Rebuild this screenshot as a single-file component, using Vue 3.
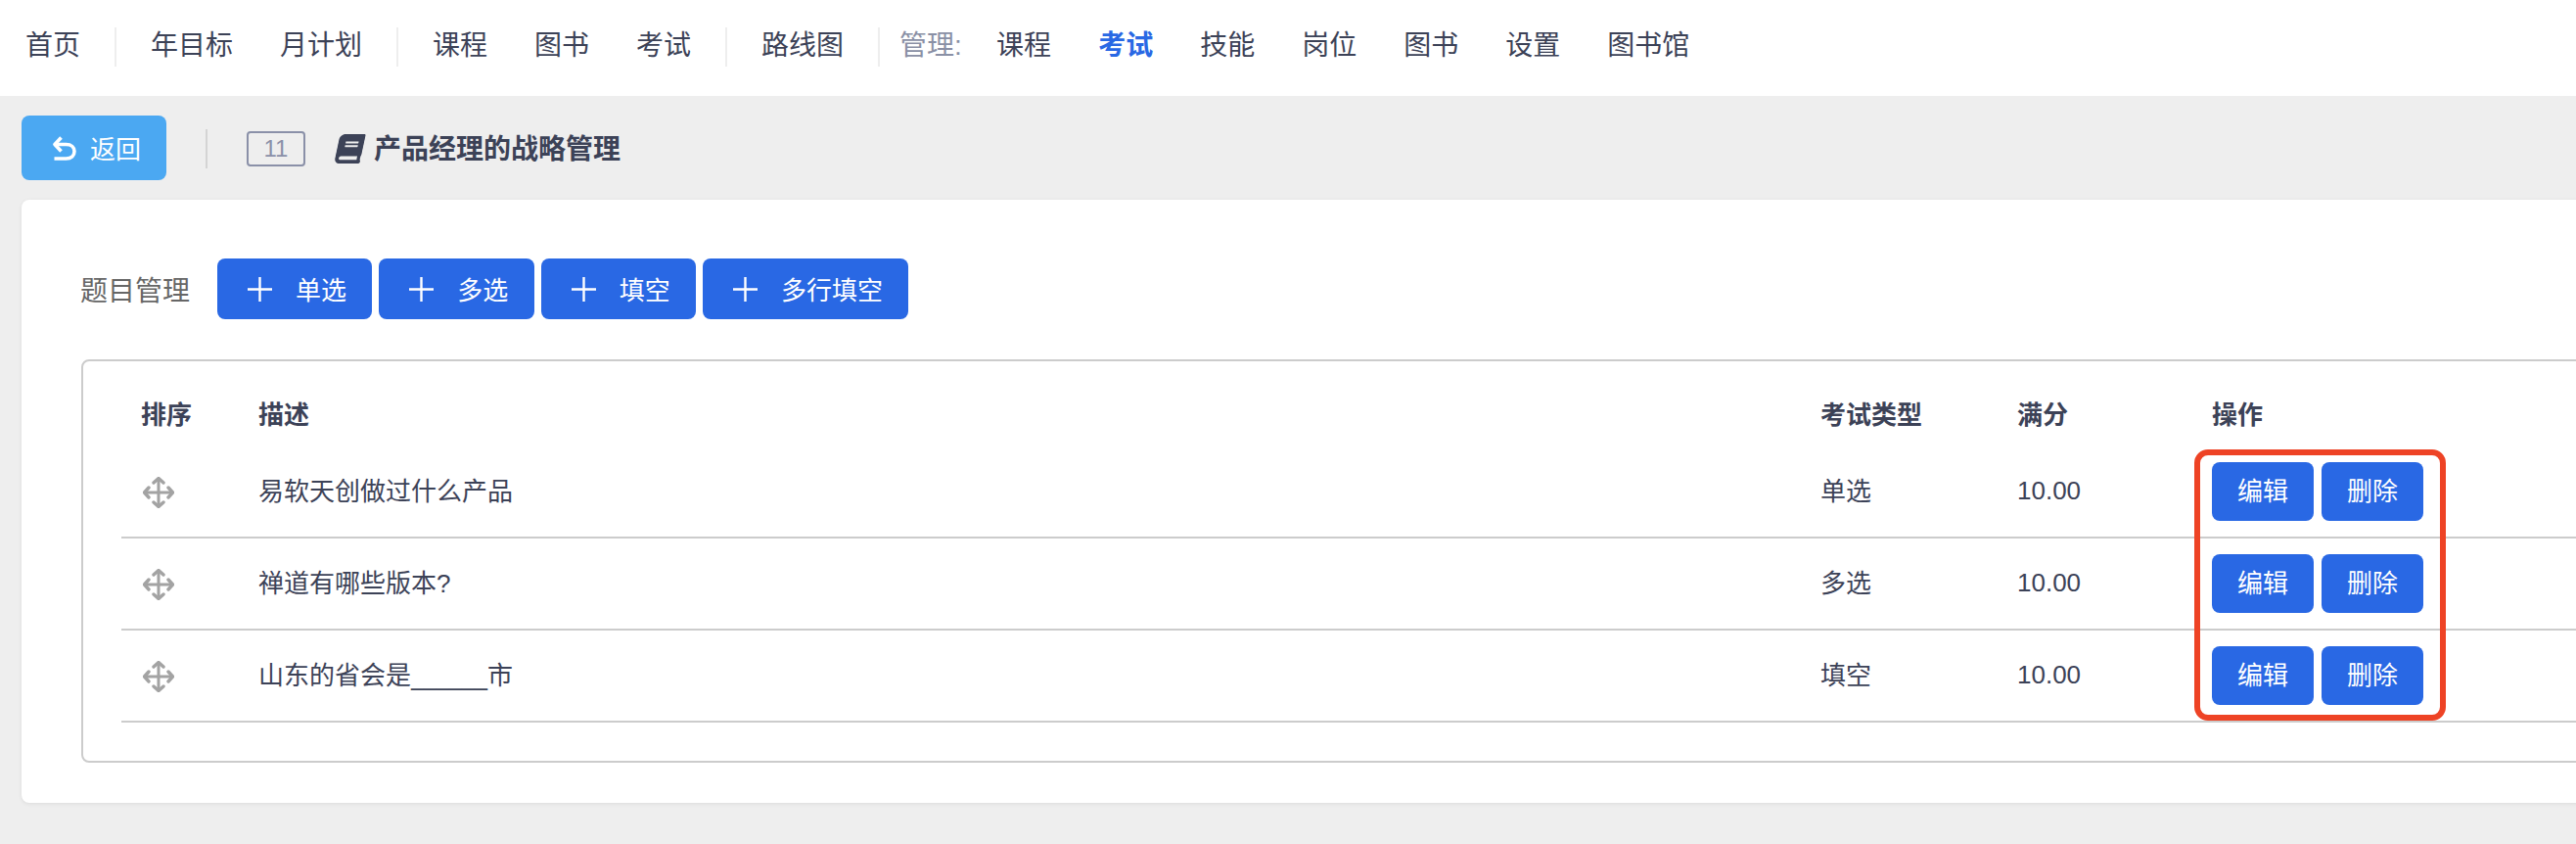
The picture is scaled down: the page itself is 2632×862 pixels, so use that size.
<script setup>
const navGroups = [
  ['首页'],
  ['年目标', '月计划'],
  ['课程', '图书', '考试'],
  ['路线图']
]
const adminItems = ['课程', '考试', '技能', '岗位', '图书', '设置', '图书馆']
const addButtons = ['单选', '多选', '填空', '多行填空']
const rows = [
  { id: 1, desc: '易软天创做过什么产品', type: '单选', score: '10.00' },
  { id: 2, desc: '禅道有哪些版本?', type: '多选', score: '10.00' },
  { id: 3, desc: '山东的省会是', blank: '______', tail: '市', type: '填空', score: '10.00' }
]
</script>

<template>
  <div class="page">
    <nav class="nav">
      <template v-for="(group, i) in navGroups" :key="i">
        <a v-for="item in group" :key="item" class="nav-item">{{ item }}</a>
        <span class="nav-sep"></span>
      </template>
      <span class="nav-label">管理:</span>
      <a
        v-for="item in adminItems"
        :key="item"
        class="nav-item"
        :class="{ active: item === '考试' }"
      >{{ item }}</a>
    </nav>

    <header class="subbar">
      <button class="back-btn">
        <svg class="back-icon" viewBox="1 0 23 25" fill="none" stroke="#fff" stroke-width="3.6">
          <path d="M9 1.500 L2.500 8.500 L9 15.500" stroke-linejoin="round" />
          <path d="M3 8.500 H14 C19.500 8.500 22.500 11.500 22.500 15.500 C22.500 20 19.500 23 14 23 H2" />
        </svg>
        <span>返回</span>
      </button>
      <span class="subbar-sep"></span>
      <span class="badge">11</span>
      <svg class="book-icon" viewBox="0 0 448 512" fill="#3c4257">
        <path d="M448 360V24c0-13.300-10.700-24-24-24H96C43 0 0 43 0 96v320c0 53 43 96 96 96h328c13.300 0 24-10.700 24-24v-16c0-7.500-3.500-14.300-8.900-18.700-4.200-15.400-4.200-59.300 0-74.700 5.400-4.300 8.900-11.100 8.900-18.600zM128 134c0-3.300 2.700-6 6-6h212c3.300 0 6 2.700 6 6v20c0 3.300-2.700 6-6 6H134c-3.300 0-6-2.700-6-6v-20zm0 64c0-3.300 2.700-6 6-6h212c3.300 0 6 2.700 6 6v20c0 3.300-2.700 6-6 6H134c-3.300 0-6-2.700-6-6v-20zm253.400 250H96c-17.700 0-32-14.300-32-32 0-17.600 14.400-32 32-32h285.400c-1.900 17.100-1.900 46.900 0 64z" />
      </svg>
      <h1 class="title">产品经理的战略管理</h1>
    </header>

    <main class="card">
      <div class="toolbar">
        <span class="toolbar-label">题目管理</span>
        <button v-for="label in addButtons" :key="label" class="add-btn">
          <svg class="plus" viewBox="0 0 25 25" stroke="#fff" stroke-width="2.400">
            <path d="M12.500 0 V25 M0 12.500 H25" />
          </svg>
          <span>{{ label }}</span>
        </button>
      </div>

      <section class="table-box">
        <div class="table">
          <div class="row head">
            <span>排序</span>
            <span>描述</span>
            <span>考试类型</span>
            <span>满分</span>
            <span>操作</span>
          </div>
          <div v-for="row in rows" :key="row.id" class="row body">
            <svg class="move" viewBox="0 0 32 32" fill="none" stroke="#a3a3a3" stroke-width="3.400">
              <path d="M16 2 V30 M2 16 H30" stroke-width="3" />
              <path d="M11 6 L16 1.500 L21 6 M11 26 L16 30.500 L21 26 M6 11 L1.500 16 L6 21 M26 11 L30.500 16 L26 21" stroke-linejoin="round" stroke-linecap="round" />
            </svg>
            <span class="cell">{{ row.desc }}<span v-if="row.blank" class="blank">{{ row.blank }}</span>{{ row.tail }}</span>
            <span class="cell">{{ row.type }}</span>
            <span class="num">{{ row.score }}</span>
            <div class="actions">
              <button class="act-btn">编辑</button>
              <button class="act-btn">删除</button>
            </div>
          </div>
          <div class="highlight"></div>
        </div>
      </section>
    </main>
  </div>
</template>

<style>
html, body { margin: 0; background: #eeeeee; overflow: hidden; }
</style>

<style scoped>
.page {
  width: 2632px;
  height: 862px;
  overflow: hidden;
  background: #eeeeee;
  font-family: "Liberation Sans", "Noto Sans CJK SC", sans-serif;
  color: #3c4257;
}
.nav {
  height: 98px;
  background: #fff;
  display: flex;
  align-items: center;
  padding: 0 0 0 2px;
  box-sizing: border-box;
  font-size: 28px;
}
.nav-item {
  padding: 0 24px 4px;
  line-height: 40px;
  color: #3c4257;
  white-space: nowrap;
}
.nav-item.active { color: #2968e4; font-weight: 700; }
.nav-sep {
  width: 2px;
  height: 40px;
  margin: 0 11px 2px;
  background: #eeeeee;
}
.nav-label {
  width: 96px;
  padding: 0 0 4px 21px;
  margin-left: -12px;
  box-sizing: border-box;
  line-height: 40px;
  color: #8a90a5;
  white-space: nowrap;
}
.subbar {
  height: 106px;
  box-sizing: border-box;
  padding: 20px 0 20px 22px;
  display: flex;
  align-items: flex-start;
}
.back-btn {
  width: 148px;
  height: 66px;
  border: 0;
  border-radius: 8px;
  background: #4ba8f2;
  color: #fff;
  font: inherit;
  font-size: 26px;
  display: flex;
  align-items: center;
  gap: 14px;
  padding: 0 0 0 32px;
}
.back-btn span { position: relative; top: -1px; }
.back-icon { width: 24px; height: 25px; }
.subbar-sep {
  width: 2px;
  height: 40px;
  margin: 14px 40px 0 40px;
  background: #d4d4d4;
}
.badge {
  width: 60px;
  height: 36px;
  margin-top: 16px;
  box-sizing: border-box;
  border: 2px solid #8a90a8;
  border-radius: 4px;
  color: #8a90a8;
  font-size: 24px;
  line-height: 32px;
  text-align: center;
}
.book-icon {
  width: 27px;
  height: 30px;
  margin: 19px 0 0 32px;
  transform: skewX(-12deg);
}
.title {
  margin: 15px 0 0 11px;
  font-size: 28px;
  line-height: 40px;
  font-weight: 700;
  color: #3c4257;
}
.card {
  width: 2800px;
  height: 616px;
  margin-left: 22px;
  box-sizing: border-box;
  padding: 60px 0 0 61px;
  background: #fff;
  border-radius: 8px;
  box-shadow: 0 1px 4px rgba(0, 0, 0, 0.08);
}
.toolbar {
  display: flex;
  align-items: center;
  gap: 7px;
  height: 62px;
  margin-left: -1px;
}
.toolbar-label {
  width: 133px;
  font-size: 28px;
  color: #666;
}
.add-btn {
  height: 62px;
  border: 0;
  border-radius: 8px;
  background: #2968e4;
  color: #fff;
  font: inherit;
  font-size: 26px;
  display: flex;
  align-items: center;
  gap: 24px;
  padding: 0 26.300px 2px 31px;
}
.plus { width: 25px; height: 25px; margin-top: 2px; }
.table-box {
  margin-top: 41px;
  width: 2700px;
  height: 412px;
  box-sizing: border-box;
  border: 2px solid #ccc;
  border-radius: 8px;
  padding: 0 0 0 39px;
}
.table { position: relative; font-size: 26px; }
.row {
  display: grid;
  grid-template-columns: 120px 1596px 201px 199px 1fr;
  align-items: center;
  padding-left: 20px;
}
.head { height: 87px; box-sizing: border-box; padding-top: 18px; font-weight: 700; }
.body {
  height: 94px;
  box-sizing: border-box;
  border-bottom: 2px solid #ccc;
}
.cell { padding-bottom: 6px; }
.num { padding-bottom: 1px; }
.blank { font-family: "DejaVu Sans", sans-serif; }
.move { width: 32px; height: 32px; margin-left: 2px; margin-top: 2px; }
.actions { display: flex; gap: 8px; }
.act-btn {
  width: 104px;
  height: 60px;
  border: 0;
  border-radius: 8px;
  background: #2968e4;
  color: #fff;
  font: inherit;
  font-size: 26px;
  padding: 0 0 6px;
}
.highlight {
  position: absolute;
  left: 2118px;
  top: 90px;
  width: 257px;
  height: 277px;
  box-sizing: border-box;
  border: 6px solid #ee4325;
  border-radius: 14px;
}
</style>
